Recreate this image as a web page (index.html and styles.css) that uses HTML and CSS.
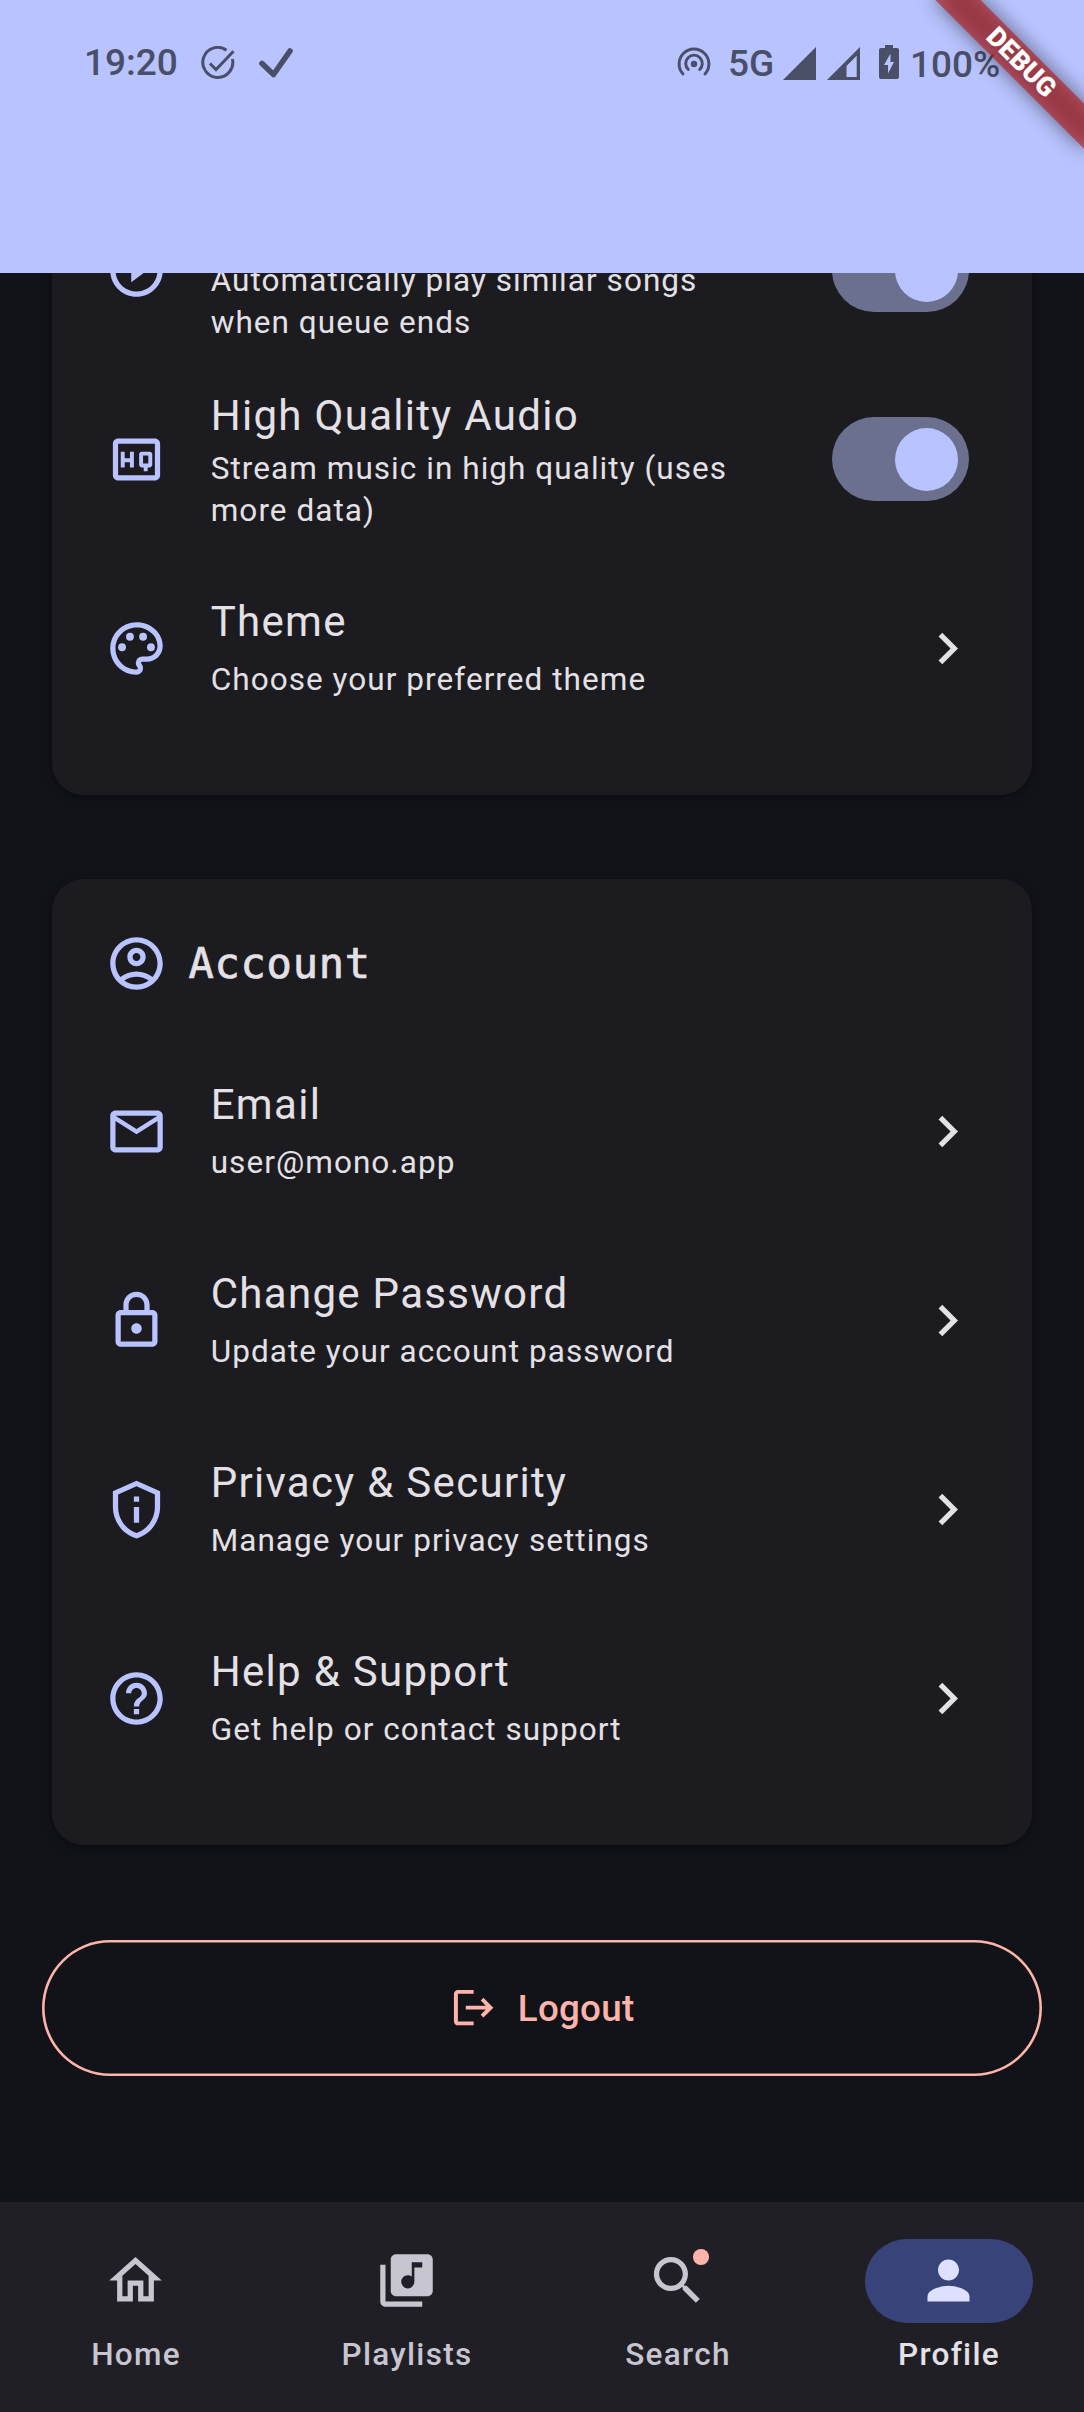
FILE: index.html
```html
<!DOCTYPE html>
<html lang="en">
<head>
<meta charset="utf-8">
<title>Profile</title>
<link rel="stylesheet" href="styles.css">
</head>
<body>
<div class="screen">
  <header class="app-bar">
    <div class="status">
      <span class="clock">19:20</span>
      <svg class="task-icon" viewBox="0 0 34 34" fill="none" stroke="currentColor" stroke-width="3"><path d="M25.5 4.2A15 15 0 1 0 31.4 13"/><path d="M9 17.5l6 6L32.5 5.2"/></svg>
      <svg class="check-icon" viewBox="0 0 36 34" fill="none" stroke="currentColor" stroke-width="5.6" stroke-linecap="round" stroke-linejoin="round"><path d="M4 17.500L15.500 28.500L32 5"/></svg>
      <span class="spacer"></span>
      <svg class="hotspot-icon" viewBox="0 0 34 34" fill="none" stroke="currentColor" stroke-width="2.900" stroke-linecap="round"><path d="M6 27A14.900 14.900 0 1 1 28 27"/><path d="M11.300 22.500A8.300 8.300 0 1 1 22.700 22.500"/><circle cx="17" cy="17" r="3.200" fill="currentColor" stroke="none"/></svg>
      <span class="network">5G</span>
      <svg class="signal" viewBox="0 0 33 33" fill="currentColor"><path d="M33 0V33H0z"/></svg>
      <svg class="signal" viewBox="0 0 33 33" fill="currentColor"><path fill-rule="evenodd" d="M33 0V33H0zM29.700 8.800L19.500 19V30H29.700z"/></svg>
      <svg class="battery" viewBox="0 0 20 34" fill="currentColor"><path fill-rule="evenodd" d="M6 0h8v3h4a2 2 0 0 1 2 2v27a2 2 0 0 1-2 2H2a2 2 0 0 1-2-2V5a2 2 0 0 1 2-2h4zM11.500 8.500L5 20h4v8.500L15 17h-3.500z"/></svg>
      <span class="percent">100%</span>
    </div>
  </header>

  <main class="content">
    <section class="card card-scrolled">
      <div class="row row-tall row-cut">
        <svg class="icon" viewBox="0 0 24 24"><path d="M10 16.500l6-4.500-6-4.500v9zM12 2C6.480 2 2 6.480 2 12s4.480 10 10 10 10-4.480 10-10S17.520 2 12 2zm0 18c-4.410 0-8-3.590-8-8s3.590-8 8-8 8 3.590 8 8-3.590 8-8 8z"/></svg>
        <div class="text"><p class="sub">Automatically play similar songs<br>when queue ends</p></div>
        <span class="switch"><span class="thumb"></span></span>
      </div>
      <div class="row row-tall">
        <svg class="icon" viewBox="0 0 24 24"><path d="M19 4H5c-1.110 0-2 .9-2 2v12c0 1.100.89 2 2 2h14c1.100 0 2-.9 2-2V6c0-1.100-.9-2-2-2zm0 14H5V6h14v12zM7.500 13h2v2H11V9H9.500v2.500h-2V9H6v6h1.500v-2zm6.500 2h.75v1.500h1.500V15H17c.55 0 1-.45 1-1v-4c0-.55-.45-1-1-1h-3c-.55 0-1 .45-1 1v4c0 .55.45 1 1 1zm.5-4.500h2v3h-2v-3z"/></svg>
        <div class="text"><p class="title">High Quality Audio</p><p class="sub">Stream music in high quality (uses<br>more data)</p></div>
        <span class="switch"><span class="thumb"></span></span>
      </div>
      <div class="row">
        <svg class="icon" viewBox="0 0 24 24"><path d="M12 22C6.490 22 2 17.510 2 12S6.490 2 12 2s10 4.040 10 9c0 3.310-2.690 6-6 6h-1.770c-.28 0-.5.22-.5.5 0 .12.050.23.130.33.410.47.640 1.060.640 1.670A2.500 2.500 0 0 1 12 22zm0-18c-4.410 0-8 3.590-8 8s3.590 8 8 8c.28 0 .5-.22.5-.5a.54.54 0 0 0-.14-.35c-.41-.46-.63-1.050-.63-1.650a2.500 2.500 0 0 1 2.500-2.500H16c2.210 0 4-1.790 4-4 0-3.860-3.590-7-8-7z"/><circle cx="6.500" cy="11.500" r="1.500"/><circle cx="9.500" cy="7.500" r="1.500"/><circle cx="14.500" cy="7.500" r="1.500"/><circle cx="17.500" cy="11.500" r="1.500"/></svg>
        <div class="text"><p class="title">Theme</p><p class="sub">Choose your preferred theme</p></div>
        <svg class="icon chevron" viewBox="0 0 24 24"><path d="M10 6L8.590 7.410 13.170 12l-4.580 4.590L10 18l6-6z"/></svg>
      </div>
    </section>

    <section class="card">
      <div class="card-head">
        <svg class="icon" viewBox="0 0 24 24"><path fill-rule="evenodd" d="M12 2C6.480 2 2 6.480 2 12s4.480 10 10 10 10-4.480 10-10S17.520 2 12 2zM7.350 18.500C8.660 17.560 10.260 17 12 17s3.340.56 4.650 1.500C15.340 19.440 13.740 20 12 20s-3.340-.56-4.650-1.500zM18.140 17.120C16.450 15.800 14.320 15 12 15s-4.450.8-6.140 2.120C4.700 15.730 4 13.950 4 12c0-4.420 3.580-8 8-8s8 3.580 8 8c0 1.950-.7 3.730-1.860 5.120zM12 6c-1.930 0-3.500 1.570-3.500 3.500S10.070 13 12 13s3.500-1.570 3.500-3.500S13.930 6 12 6zM12 11c-.83 0-1.500-.67-1.500-1.500S11.170 8 12 8s1.500.67 1.500 1.500S12.830 11 12 11z"/></svg>
        <h2 class="heading">Account</h2>
      </div>
      <div class="row">
        <svg class="icon" viewBox="0 0 24 24"><path d="M22 6c0-1.100-.9-2-2-2H4c-1.100 0-2 .9-2 2v12c0 1.100.9 2 2 2h16c1.100 0 2-.9 2-2V6zm-2 0l-8 5-8-5h16zm0 12H4V8l8 5 8-5v10z"/></svg>
        <div class="text"><p class="title">Email</p><p class="sub">user@mono.app</p></div>
        <svg class="icon chevron" viewBox="0 0 24 24"><path d="M10 6L8.590 7.410 13.170 12l-4.580 4.590L10 18l6-6z"/></svg>
      </div>
      <div class="row">
        <svg class="icon" viewBox="0 0 24 24"><path d="M18 8h-1V6c0-2.760-2.240-5-5-5S7 3.240 7 6v2H6c-1.100 0-2 .9-2 2v10c0 1.100.9 2 2 2h12c1.100 0 2-.9 2-2V10c0-1.100-.9-2-2-2zM9 6c0-1.660 1.340-3 3-3s3 1.340 3 3v2H9V6zm9 14H6V10h12v10zm-6-3c1.100 0 2-.9 2-2s-.9-2-2-2-2 .9-2 2 .9 2 2 2z"/></svg>
        <div class="text"><p class="title">Change Password</p><p class="sub">Update your account password</p></div>
        <svg class="icon chevron" viewBox="0 0 24 24"><path d="M10 6L8.590 7.410 13.170 12l-4.580 4.590L10 18l6-6z"/></svg>
      </div>
      <div class="row">
        <svg class="icon" viewBox="0 0 24 24"><path d="M12 1L3 5v6c0 5.550 3.840 10.740 9 12 5.160-1.260 9-6.450 9-12V5l-9-4zm0 2.190l7 3.110V11c0 4.520-2.980 8.690-7 9.930-4.020-1.240-7-5.410-7-9.930V6.300l7-3.110zM11 7h2v2h-2V7zm0 4h2v6h-2v-6z"/></svg>
        <div class="text"><p class="title">Privacy &amp; Security</p><p class="sub">Manage your privacy settings</p></div>
        <svg class="icon chevron" viewBox="0 0 24 24"><path d="M10 6L8.590 7.410 13.170 12l-4.580 4.590L10 18l6-6z"/></svg>
      </div>
      <div class="row">
        <svg class="icon" viewBox="0 0 24 24"><path d="M11 18h2v-2h-2v2zm1-16C6.480 2 2 6.480 2 12s4.480 10 10 10 10-4.480 10-10S17.520 2 12 2zm0 18c-4.410 0-8-3.590-8-8s3.590-8 8-8 8 3.590 8 8-3.590 8-8 8zm0-14c-2.210 0-4 1.790-4 4h2c0-1.100.9-2 2-2s2 .9 2 2c0 2-3 1.750-3 5h2c0-2.250 3-2.500 3-5 0-2.210-1.790-4-4-4z"/></svg>
        <div class="text"><p class="title">Help &amp; Support</p><p class="sub">Get help or contact support</p></div>
        <svg class="icon chevron" viewBox="0 0 24 24"><path d="M10 6L8.590 7.410 13.170 12l-4.580 4.590L10 18l6-6z"/></svg>
      </div>
    </section>

    <button class="logout" type="button">
      <svg class="logout-icon" viewBox="0 0 24 24"><path d="M17 7l-1.410 1.410L18.170 11H8v2h10.170l-2.580 2.580L17 17l5-5zM4 5h8V3H4c-1.100 0-2 .9-2 2v14c0 1.100.9 2 2 2h8v-2H4V5z"/></svg>
      <span>Logout</span>
    </button>
  </main>

  <nav class="nav">
    <a class="nav-item">
      <span class="indicator"><svg class="icon" viewBox="0 0 24 24"><path d="M12 5.690l5 4.500V18h-2v-6H9v6H7v-7.810l5-4.500M12 3L2 12h3v8h6v-6h2v6h6v-8h3L12 3z"/></svg></span>
      <span>Home</span>
    </a>
    <a class="nav-item">
      <span class="indicator"><svg class="icon" viewBox="0 0 24 24"><path d="M20 2H8c-1.100 0-2 .9-2 2v12c0 1.100.9 2 2 2h12c1.100 0 2-.9 2-2V4c0-1.100-.9-2-2-2zm-2 5h-3v5.500c0 1.380-1.120 2.500-2.500 2.500S10 13.880 10 12.500s1.120-2.500 2.500-2.500c.57 0 1.080.19 1.500.51V5h4v2zM4 6H2v14c0 1.100.9 2 2 2h14v-2H4V6z"/></svg></span>
      <span>Playlists</span>
    </a>
    <a class="nav-item">
      <span class="indicator"><span class="badged"><svg class="icon" viewBox="0 0 24 24"><path d="M15.500 14h-.79l-.28-.27C15.410 12.590 16 11.110 16 9.500 16 5.910 13.090 3 9.500 3S3 5.910 3 9.500 5.910 16 9.500 16c1.610 0 3.090-.59 4.230-1.570l.27.28v.79l5 4.990L20.490 19l-4.990-5zm-6 0C7.010 14 5 11.990 5 9.500S7.010 5 9.500 5 14 7.010 14 9.500 11.990 14 9.500 14z"/></svg><span class="badge"></span></span></span>
      <span>Search</span>
    </a>
    <a class="nav-item active">
      <span class="indicator"><svg class="icon" viewBox="0 0 24 24"><path d="M12 12c2.210 0 4-1.790 4-4s-1.790-4-4-4-4 1.790-4 4 1.790 4 4 4zm0 2c-2.670 0-8 1.340-8 4v2h16v-2c0-2.660-5.330-4-8-4z"/></svg></span>
      <span>Profile</span>
    </a>
  </nav>

  <div class="debug-banner"><span>DEBUG</span></div>
</div>
</body>
</html>
```
FILE: styles.css
```css
* { box-sizing: border-box; }

body {
  margin: 0;
  background: #121318;
  color: #e4e1e6;
  font-family: Roboto, "Noto Sans", sans-serif;
}

p, h2 { margin: 0; }

svg { display: block; flex: none; fill: currentColor; }
svg[fill="none"] { fill: none; }

.screen {
  position: relative;
  display: flex;
  flex-direction: column;
  width: 1084px;
  height: 2412px;
  overflow: hidden;
}

/* Top bar */
.app-bar {
  flex: none;
  height: 273px;
  background: #b8c3ff;
  color: #4a4f68;
}

.status {
  display: flex;
  align-items: center;
  height: 126px;
  padding: 0 83px 0 84px;
  font-size: 37px;
  font-weight: 500;
}

.clock { width: 117px; margin-top: -1px; }
.task-icon { width: 34px; height: 34px; }
.check-icon { width: 36px; height: 34px; margin-left: 23px; }
.spacer { flex: 1; }
.hotspot-icon { width: 34px; height: 34px; margin-top: 2px; }
.network { margin: 1px 0 0 17px; width: 55px; }
.signal { width: 33px; height: 33px; margin-right: 11px; }
.battery { width: 20px; height: 34px; margin: -2px 11px 0 8px; }
.percent { width: 91px; padding-top: 2px; white-space: nowrap; }

/* Scrolling content */
.content {
  flex: none;
  display: flex;
  flex-direction: column;
  height: 1929px;
  padding: 0 42px;
  overflow: hidden;
}

.card {
  flex: none;
  margin: 0 10.5px 84px 10px;
  padding: 52.5px 52.5px 52.5px 53px;
  border-radius: 31.5px;
  background: #1c1b20;
  box-shadow: 0 3px 8px rgba(0, 0, 0, 0.35);
}

.card-scrolled { margin-top: -150px; }

.card-head {
  display: flex;
  align-items: center;
  gap: 20.5px;
  height: 63px;
  margin-bottom: 42px;
}

.heading {
  font-family: "DejaVu Sans Mono", monospace;
  font-size: 42px;
  font-weight: 400;
  letter-spacing: 0.75px;
  line-height: 63px;
  -webkit-text-stroke: 0.7px currentColor;
}

.icon { width: 63px; height: 63px; color: #b8c3ff; }
.chevron { color: #e4e1e6; }

.row {
  display: flex;
  align-items: center;
  gap: 42.7px;
  height: 189px;
}

.text {
  flex: 1;
  align-self: stretch;
  padding-top: 36px;
}

.row-tall { padding-right: 10.5px; }
.row-tall .text { padding-top: 19px; }
.row-cut .text { padding-top: 83px; }

.title {
  font-size: 42px;
  line-height: 63px;
  letter-spacing: 1.3px;
}

.sub {
  margin-top: 6px;
  font-size: 31.5px;
  line-height: 42px;
  letter-spacing: 1.05px;
  white-space: nowrap;
}

.row-tall .sub { margin-top: 1.5px; }

.switch {
  display: flex;
  justify-content: flex-end;
  align-items: center;
  width: 136.5px;
  height: 84px;
  padding-right: 10.5px;
  border-radius: 42px;
  background: #6c708f;
}

.thumb {
  width: 63px;
  height: 63px;
  border-radius: 50%;
  background: #b8c3ff;
}

.logout {
  flex: none;
  display: flex;
  justify-content: center;
  align-items: center;
  gap: 21px;
  height: 136.5px;
  margin-top: 10.5px;
  padding: 0;
  border: 0;
  border-radius: 69px;
  background: none;
  box-shadow: inset 0 0 0 2.6px #ffb4ab;
  color: #ffb4ab;
  font-family: inherit;
  font-size: 36.75px;
  font-weight: 500;
  letter-spacing: 0.26px;
}

.logout span { padding-top: 1px; }

.logout-icon { width: 47.25px; height: 47.25px; }

/* Bottom navigation */
.nav {
  flex: none;
  display: flex;
  height: 210px;
  padding-top: 36.75px;
  background: #201f25;
}

.nav-item {
  flex: 1;
  display: flex;
  flex-direction: column;
  align-items: center;
  gap: 11.5px;
  color: #c7c5d0;
  font-size: 31.5px;
  font-weight: 500;
  line-height: 42px;
  letter-spacing: 1.3px;
}

.nav-item .icon { color: inherit; }
.nav-item > span:last-child { padding-left: 1px; }

.indicator {
  display: flex;
  justify-content: center;
  align-items: center;
  width: 168px;
  height: 84px;
  border-radius: 42px;
}

.active { color: #e4e1e6; }
.active .indicator { background: #384379; color: #dee0ff; }

.badged { position: relative; }

.badge {
  position: absolute;
  top: 0;
  right: 0;
  width: 15.75px;
  height: 15.75px;
  border-radius: 50%;
  background: #ffb4ab;
}

/* Corner ribbon */
.debug-banner {
  position: absolute;
  top: 47px;
  left: 916px;
  width: 210px;
  height: 31.5px;
  transform: rotate(45deg);
  color: #fff;
  font-size: 26.8px;
  font-weight: 900;
  line-height: 31.5px;
  text-align: center;
}

.debug-banner::before {
  content: "";
  position: absolute;
  inset: 0;
  background: rgba(0, 0, 0, 0.5);
  filter: blur(10px);
}

.debug-banner span {
  position: relative;
  display: block;
  background: rgba(183, 28, 28, 0.63);
}
```
